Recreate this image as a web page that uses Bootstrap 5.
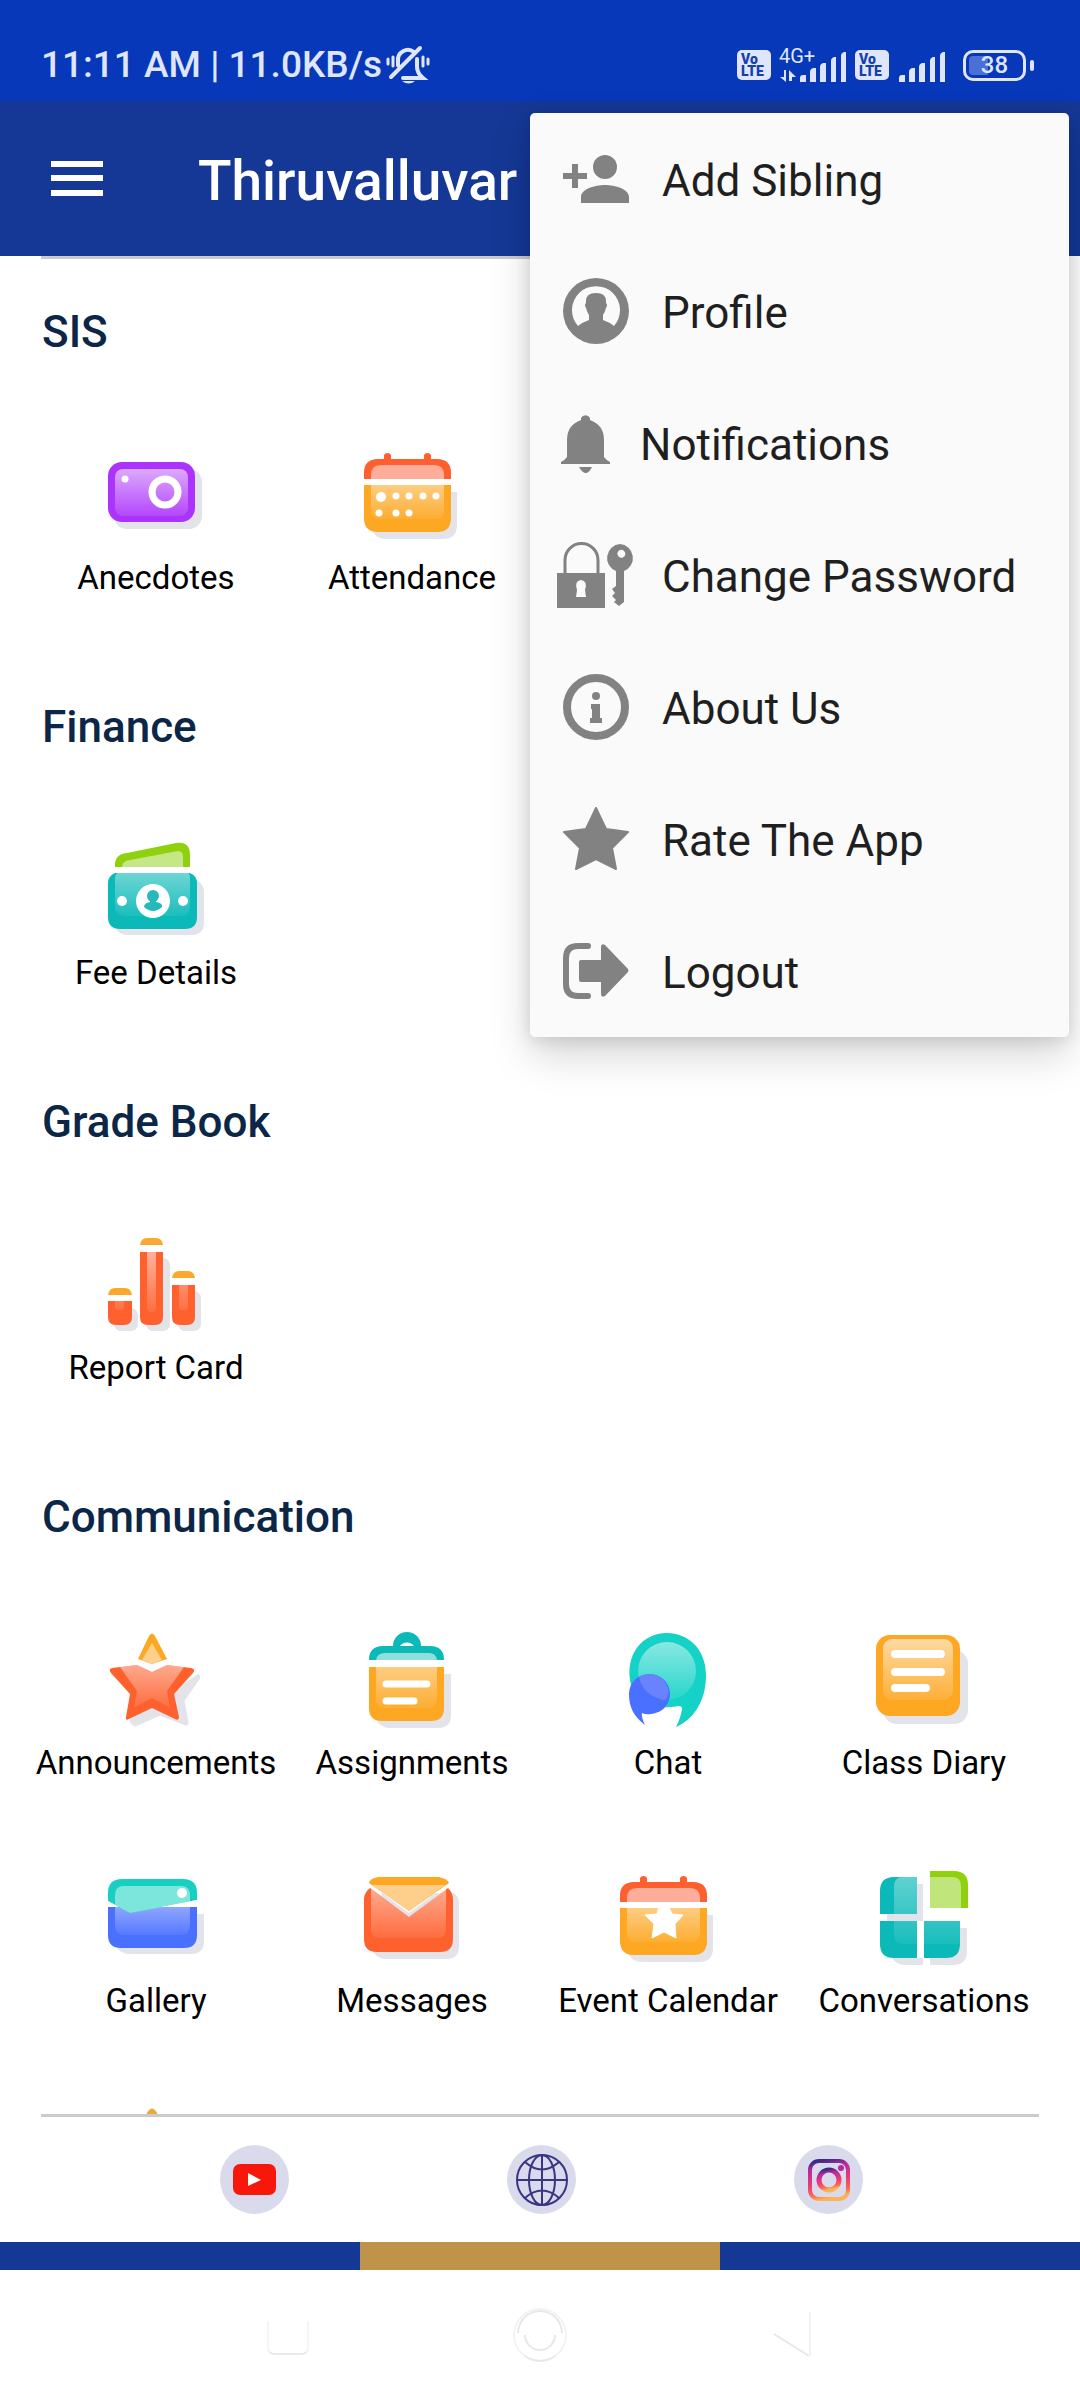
<!DOCTYPE html>
<html lang="en">
<head>
<meta charset="utf-8">
<meta name="viewport" content="width=device-width, initial-scale=1">
<title>Thiruvalluvar</title>
<link href="https://cdn.jsdelivr.net/npm/bootstrap@5.3.0/dist/css/bootstrap.min.css" rel="stylesheet">
<style>
  :root { --royal: #153896; --status: #0638b9; --ink: #0b2647; --rule: #cbcbcf; --frost: #dfe6fb; }
  body { height: 100vh; font-family: Roboto, "Liberation Sans", sans-serif; background: #fff; color: #000; }
  svg { display: block; flex: none; }
  .status-strip { height: 101px; padding: 29px 46px 0 41px; background: var(--status); color: var(--frost); }
  .status-clock { font-size: 37px; line-height: 48px; font-weight: 500; }
  .volte { width: 34px; height: 30px; border-radius: 5px; background: var(--frost); color: #153fae; font-size: 14px; line-height: 12px; font-weight: 900; padding: 3px 0 3px 4px; }
  .power { width: 63px; height: 31px; border: 3px solid var(--frost); border-radius: 10px; font-size: 24px; line-height: 25px; font-weight: 500;
    background: linear-gradient(90deg, #4a6fd6 38%, transparent 38%) content-box; padding: 3px; }
  .power span { display: block; margin-top: -3px; text-align: center; }
  .power-nub { width: 4px; height: 11px; border-radius: 2px; background: var(--frost); }
  .app-bar { height: 155px; background: var(--royal); color: #fff; padding-left: 51px; z-index: 5; }
  .app-title { font-size: 55px; line-height: 64px; font-weight: 500; margin-left: 95px; padding-top: 4px; }
  .more-menu { top: 12px; right: 11px; width: 539px; max-width: calc(100% - 22px); padding: 0; border: 0; border-radius: 5px; background: #fafafa;
    box-shadow: 0 18px 40px rgba(0,0,0,.17), 0 2px 16px rgba(0,0,0,.12); }
  .more-menu .dropdown-item { height: 132px; padding: 4px 27px 0; gap: 27px; color: #1f1f1f; font-size: 44px; line-height: 52px; }
  .more-menu svg { margin-top: -4px; fill: #828282; }
  .sheet { flex: 1 1 0; min-height: 0; overflow: hidden; padding: 14px 28px 0; }
  .rule { height: 3px; margin: 0 41px; background: var(--rule); }
  .group-head { height: 157px; padding: 29px 0 0 14px; margin: 0; font-size: 44px; line-height: 60px; font-weight: 500; color: var(--ink); }
  .tile { height: 238px; padding-top: 16px; gap: 12px; color: #000; font-size: 33px; line-height: 40px; text-decoration: none; white-space: nowrap; }
  .social-row { height: 125px; padding: 0 108px 0 111px; }
  .social-link { width: 69px; height: 69px; border-radius: 50%; background: #d9dbed; }
  .tri-band { height: 28px; }
  .band-blue { background: var(--royal); }
  .band-gold { background: #bf9349; }
  .nav-keys { height: 130px; padding: 0 162px; }
  .nav-key { border: 0; background: none; padding: 0; }
</style>
</head>
<body class="d-flex flex-column overflow-hidden">
<svg width="0" height="0" class="position-absolute" aria-hidden="true">
  <defs>
    <linearGradient id="shine" x1="0" y1="0" x2="0" y2="1"><stop offset="0" stop-color="#fff" stop-opacity=".58"/><stop offset="1" stop-color="#fff" stop-opacity=".1"/></linearGradient>
    <linearGradient id="insta" x1=".2" y1="0" x2=".4" y2="1"><stop offset="0" stop-color="#3a2a86"/><stop offset=".2" stop-color="#b52b9b"/><stop offset=".6" stop-color="#ef3a78"/><stop offset=".85" stop-color="#f9684f"/><stop offset="1" stop-color="#fdb254"/></linearGradient>
    <g id="calendar">
      <path d="M20 46H95V79Q95 93 81 93H24Q14 93 10 84Z" fill="#e3e4e9"/>
      <path d="M2 33V27Q2 13 16 13H22V9a4 4 0 0 1 7 0v4H62V9a4 4 0 0 1 7 0v4H75Q89 13 89 27V33Z" fill="#fd5f2e"/>
      <path d="M9 33V29Q9 19 19 19H72Q82 19 82 29V33Z" fill="#fdad9a"/>
      <path d="M2 39H89V72Q89 86 75 86H16Q2 86 2 72Z" fill="#fda722"/>
      <path d="M9 39H82V64Q82 73 73 73H18Q9 73 9 64Z" fill="url(#shine)" opacity=".75"/>
    </g>
    <g id="signal"><path d="M0 30v-4q0-3 3-3h3v7zM10 30V20q0-3 3-4h3v14zM20 30V15q0-3 3-4h3v19zM31 30V9q0-3 3-4h2v25zM41 30V4q0-3 3-4h2v30z"/></g>
  </defs>
</svg>

<header>
  <div class="status-strip d-flex justify-content-between align-items-center">
    <div class="status-clock d-flex align-items-center">
      <span>11:11 AM | 11.0KB/s</span>
      <svg class="ms-1" width="44" height="40" viewBox="0 0 44 40" fill="none" stroke="#dfe6fb" stroke-width="3" stroke-linecap="round"><path d="M12 20v-4a10 10 0 0 1 16-9M31 14v8q0 6 6 11H17M5 32 34 3" stroke-width="4"/><path d="M2 14v5M7 12v9M37 12v9M42 14v5M12 18v3"/><path d="M16 36h13q-6 5-13 0z" fill="#dfe6fb" stroke="none"/></svg>
    </div>
    <div class="d-flex align-items-center">
      <div class="volte">Vo<br>LTE</div>
      <svg class="ms-2" width="68" height="46" viewBox="0 -6 68 46" fill="#dfe6fb"><text x="0" y="15" font-size="20">4G+</text><path d="M5 22v7H1l6 5V22zM10 33V22l7 7h-4v4z"/><use href="#signal" x="21" y="4"/></svg>
      <div class="volte ms-2">Vo<br>LTE</div>
      <svg class="ms-2" width="50" height="34" viewBox="-2 0 50 34" fill="#dfe6fb"><use href="#signal" y="4"/></svg>
      <div class="power ms-3"><span>38</span></div>
      <div class="power-nub ms-1"></div>
    </div>
  </div>

  <nav class="app-bar position-relative d-flex align-items-center">
    <button type="button" class="nav-key" aria-label="Menu"><svg width="52" height="36" viewBox="0 0 52 36" fill="#fff"><path d="M0 0h52v6H0zM0 14h52v6H0zM0 29h52v6H0z"/></svg></button>
    <h1 class="app-title mb-0">Thiruvalluvar</h1>
    <div class="more-menu dropdown-menu show">
      <button type="button" class="dropdown-item d-flex align-items-center">
        <svg width="78" height="50" viewBox="-6 0 78 50"><circle cx="42" cy="13" r="12"/><path d="M18 49v-6c0-8 14-12 24-12s24 4 24 12v6zM9 10h6v9h9v6h-9v9H9v-9H0v-6h9z"/></svg>
        <span>Add Sibling</span>
      </button>
      <button type="button" class="dropdown-item d-flex align-items-center">
        <svg width="78" height="66" viewBox="-6 0 78 66"><path fill-rule="evenodd" d="M33 0a33 33 0 1 0 0 66a33 33 0 0 0 0-66zM15 48A24 24 0 1 1 51 48Q46 44 40 42V37Q42 34 43 30Q45 27 43 25Q44 15 33 15T23 25Q21 27 23 30Q24 34 26 37V42Q20 44 15 48z"/></svg>
        <span>Profile</span>
      </button>
      <button type="button" class="dropdown-item d-flex align-items-center">
        <svg width="56" height="60" viewBox="-4 0 56 60"><path d="M20 5a5 5 0 0 1 9 0v2q14 5 14 20v17q2 3 6 5v2H0v-2q4-2 6-5V27Q6 12 20 7zM18 54h13q-6 12-13 0z"/></svg>
        <span>Notifications</span>
      </button>
      <button type="button" class="dropdown-item d-flex align-items-center">
        <svg width="78" height="66" viewBox="0 0 78 66"><path d="M8 32V18a16 16 0 0 1 33 0v14" fill="none" stroke="#828282" stroke-width="3"/><path fill-rule="evenodd" d="M0 31h48v35H0zM19 55h10l-1-7q3-9-4-10q-7 1-4 10zM63 2a14 14 0 0 0-4 27v15l-4 3 3 4-3 3 4 4-2 2 5 4 5-4V29A14 14 0 0 0 63 2zM63 8a4 4 0 1 1-1 7a4 4 0 0 1 1-7z"/></svg>
        <span>Change Password</span>
      </button>
      <button type="button" class="dropdown-item d-flex align-items-center">
        <svg width="78" height="66" viewBox="-6 0 78 66"><circle cx="33" cy="33" r="29" fill="none" stroke="#828282" stroke-width="8"/><circle cx="33" cy="22" r="4"/><path d="M28 30h9v14h2v5H27v-5h2v-9h-1z"/></svg>
        <span>About Us</span>
      </button>
      <button type="button" class="dropdown-item d-flex align-items-center">
        <svg width="78" height="66" viewBox="-6 -1 78 66"><path d="M33 1 43 22 65 25 49 41 53 62 33 52 13 62 17 41 1 25 23 22Z" stroke="#828282" stroke-width="2" stroke-linejoin="round"/></svg>
        <span>Rate The App</span>
      </button>
      <button type="button" class="dropdown-item d-flex align-items-center">
        <svg width="78" height="56" viewBox="-6 0 78 56"><path d="M25 3H15Q3 3 3 15V41Q3 53 15 53H25" fill="none" stroke="#828282" stroke-width="6" stroke-linecap="round"/><path d="M18 17h20V4q0-4 4-2L65 26q1 2 0 3L42 53q-4 2-4-2V39H18q-2 0-2-2V19q0-2 2-2z"/></svg>
        <span>Logout</span>
      </button>
    </div>
  </nav>
</header>
<div class="rule"></div>

<main class="sheet">
  <section>
    <h2 class="group-head">SIS</h2>
    <div class="row g-0 row-cols-4">
      <a href="#" class="tile col d-flex flex-column align-items-center">
        <svg width="100" height="100" viewBox="0 0 100 100"><rect x="8" y="23" width="88" height="60" rx="13" fill="#e3e4e9"/><rect x="2" y="16" width="87" height="60" rx="14" fill="#ac33fb"/><rect x="9" y="23" width="73" height="47" rx="8" fill="url(#shine)"/><circle cx="59" cy="46" r="13" fill="none" stroke="#fff" stroke-width="7"/><circle cx="19" cy="33" r="3.500" fill="#fff"/></svg>
        <span>Anecdotes</span>
      </a>
      <a href="#" class="tile col d-flex flex-column align-items-center">
        <svg width="100" height="100" viewBox="0 0 100 100"><use href="#calendar"/><g fill="#fff"><circle cx="19" cy="51" r="5"/><circle cx="34" cy="50" r="3.500"/><circle cx="47" cy="50" r="3.500"/><circle cx="61" cy="50" r="3.500"/><circle cx="74" cy="50" r="3.500"/><circle cx="17" cy="67" r="3.500"/><circle cx="34" cy="67" r="3.500"/><circle cx="47" cy="67" r="3.500"/></g></svg>
        <span>Attendance</span>
      </a>
    </div>
  </section>
  <section>
    <h2 class="group-head">Finance</h2>
    <div class="row g-0 row-cols-4">
      <a href="#" class="tile col d-flex flex-column align-items-center">
        <svg width="100" height="100" viewBox="0 0 100 100"><path d="M20 39H91Q98 44 98 50V81Q98 94 85 94H22Q14 94 10 88Z" fill="#e3e4e9"/><path d="M9 26Q8 13 21 12L70 2Q84 0 84 14V26Z" fill="#8fd10c"/><path d="M16 26Q16 20 24 19L72 10Q77 10 77 16V26Z" fill="#c5e787"/><path d="M9 32H84Q91 35 91 42V76Q91 88 79 88H14Q2 88 2 76V42Q2 35 9 32Z" fill="#0bb9b8"/><path d="M11 32H83Q84 34 84 38V64Q84 75 75 75H18Q9 75 9 64V38Q9 34 11 32Z" fill="url(#shine)" opacity=".7"/><circle cx="47" cy="60" r="17" fill="#fff"/><circle cx="16" cy="60" r="5" fill="#fff"/><circle cx="77" cy="60" r="5" fill="#fff"/><circle cx="47" cy="55" r="6" fill="#25b9ba"/><path d="M44 58h6v3q7 1 6 5-9 8-18 0 0-4 6-5z" fill="#25b9ba"/></svg>
        <span>Fee Details</span>
      </a>
    </div>
  </section>
  <section>
    <h2 class="group-head">Grade Book</h2>
    <div class="row g-0 row-cols-4">
      <a href="#" class="tile col d-flex flex-column align-items-center">
        <svg width="100" height="100" viewBox="0 0 100 100"><g fill="#e3e4e9"><rect x="8" y="72" width="24" height="23" rx="7"/><rect x="40" y="22" width="24" height="73" rx="7"/><rect x="72" y="55" width="23" height="40" rx="7"/></g><g fill="#fba92d"><path d="M2 59q1-7 7-7h10q6 0 7 7zM34 9q1-7 7-7h9q6 0 7 7zM66 42q1-7 7-7h9q6 0 7 7z"/></g><g fill="#fff"><path d="M2 59h24v6H2zM34 9h23v7H34zM66 42h23v7H66z"/></g><g fill="#fe602e"><path d="M2 65h24v16q0 8-8 8h-8q-8 0-8-8zM34 16h23v65q0 8-8 8h-7q-8 0-8-8zM66 49h23v32q0 8-8 8h-7q-8 0-8-8z"/></g><path d="M9 65h9v6q0 3-3 3h-3q-3 0-3-3zM41 16h9v56q0 4-4 4h-1q-4 0-4-4zM73 49h9v22q0 3-3 3h-3q-3 0-3-3z" fill="url(#shine)" opacity=".9"/></svg>
        <span>Report Card</span>
      </a>
    </div>
  </section>
  <section>
    <h2 class="group-head">Communication</h2>
    <div class="row g-0 row-cols-4">
      <a href="#" class="tile col d-flex flex-column align-items-center">
        <svg width="100" height="100" viewBox="0 0 100 100"><path d="M92 46 76 69 80 92 54 82 29 93 26 90Z" fill="#e3e4e9" stroke="#e3e4e9" stroke-width="5" stroke-linejoin="round"/><path d="M43 5q3-5 6 0L61 28 46 33 32 28Z" fill="#fda722"/><path d="M46 12 56 29 46 33 36 29Z" fill="#fdd08b"/><path d="M31 34 46 41 61 34 85 37q5 1 2 5L68 63 73 86q0 4-4 2L46 77 23 88q-4 2-3-2L24 63 5 42q-3-4 1-5Z" fill="#fe602e"/><path d="M14 36 31 34 46 41 61 34 78 36 61 60 64 77 46 67 28 77 31 60Z" fill="url(#shine)" opacity=".8"/></svg>
        <span>Announcements</span>
      </a>
      <a href="#" class="tile col d-flex flex-column align-items-center">
        <svg width="100" height="100" viewBox="0 0 100 100"><path d="M20 43H89V84Q89 97 76 97H27Q20 97 15 90Z" fill="#e3e4e9"/><path d="M7 29Q7 15 21 15H31a14 14 0 0 1 28 0H68Q82 15 82 29Z" fill="#0bb9b8"/><path d="M38 15a8 7 0 0 1 14 0z" fill="#fff"/><path d="M14 29Q15 22 23 22H67Q74 22 75 29Z" fill="#90dfdc"/><path d="M7 36H82V77Q82 90 69 90H20Q7 90 7 77Z" fill="#fda722"/><path d="M14 36H75V68Q75 77 66 77H23Q14 77 14 68Z" fill="url(#shine)" opacity=".75"/><path d="M24 53H65M24 70H52" stroke="#fff" stroke-width="7" stroke-linecap="round"/></svg>
        <span>Assignments</span>
      </a>
      <a href="#" class="tile col d-flex flex-column align-items-center">
        <svg width="100" height="100" viewBox="0 0 100 100"><path d="M49 2C70 2 88 18 88 44C88 70 76 88 58 96Q63 86 64 78Q64 75 61 75Q50 77 42 76L13 54C6 24 24 2 49 2Z" fill="#14d2c6"/><circle cx="49" cy="40" r="29" fill="url(#shine)" opacity=".85"/><path d="M31 43A20 20 0 0 1 33 83Q28 84 24 82Q23 86 27 94C15 85 11 75 11 63A20 20 0 0 1 31 43Z" fill="#4a70ff"/><path d="M21 46Q36 38 47 51Q54 61 47 69Q26 66 21 46Z" fill="#7f90ff" opacity=".6"/></svg>
        <span>Chat</span>
      </a>
      <a href="#" class="tile col d-flex flex-column align-items-center">
        <svg width="100" height="100" viewBox="0 0 100 100"><rect x="9" y="19" width="85" height="74" rx="14" fill="#e3e4e9"/><rect x="2" y="4" width="84" height="81" rx="14" fill="#fda722"/><rect x="9" y="8" width="70" height="61" rx="9" fill="url(#shine)"/><path d="M21 23H67M21 41H67M21 57H52" stroke="#fff" stroke-width="8" stroke-linecap="round"/></svg>
        <span>Class Diary</span>
      </a>
      <a href="#" class="tile col d-flex flex-column align-items-center">
        <svg width="100" height="100" viewBox="0 0 100 100"><path d="M20 45H98V72Q98 85 85 85H24Q16 85 11 79Z" fill="#e3e4e9"/><path d="M2 38H91V66Q91 79 78 79H15Q2 79 2 66Z" fill="#4a70ff"/><path d="M9 38H84V56Q84 66 75 66H18Q9 66 9 56Z" fill="url(#shine)" opacity=".65"/><path d="M2 32V24Q2 10 16 10H77Q91 10 91 24V31L24 44Z" fill="#17d0c2"/><path d="M9 36V26Q9 17 18 17H75Q84 17 84 26V33L24 44Z" fill="#7ce6dc"/><path d="M2 32 12 38H2ZM55 38 91 31V38Z" fill="#fff"/><circle cx="76" cy="24" r="5" fill="#fff"/></svg>
        <span>Gallery</span>
      </a>
      <a href="#" class="tile col d-flex flex-column align-items-center">
        <svg width="100" height="100" viewBox="0 0 100 100"><path d="M20 24H92Q97 28 97 34V77Q97 90 84 90H24Q16 90 11 83Z" fill="#e3e4e9"/><path d="M7 14 47 44 87 14 90 18 86 22H8Z" fill="#fff"/><path d="M8 19 47 48 86 19Q91 24 91 30V70Q91 83 78 83H15Q2 83 2 70V30Q2 24 8 19Z" fill="#fe602e"/><path d="M9 20 47 48 84 20V60Q84 69 75 69H18Q9 69 9 60Z" fill="url(#shine)" opacity=".8"/><path d="M7 14Q7 10 16 8H77Q86 10 87 14L47 42Z" fill="#fda722"/><path d="M10 16H83L47 42Z" fill="#fdcf8a"/></svg>
        <span>Messages</span>
      </a>
      <a href="#" class="tile col d-flex flex-column align-items-center">
        <svg width="100" height="100" viewBox="0 0 100 100"><use href="#calendar"/><path d="M41 38H51L54 45 65 46 57 55 58 69 46 63 34 69 36 55 27 46 39 45Z" fill="#fff" stroke="#fff" stroke-linejoin="round"/></svg>
        <span>Event Calendar</span>
      </a>
      <a href="#" class="tile col d-flex flex-column align-items-center">
        <svg width="100" height="100" viewBox="0 0 100 100"><path d="M43 15H49V52H43ZM13 45H43V52H13ZM18 89H49V96H30Q22 95 18 89ZM56 89H72Q86 88 86 74V59H93V82Q93 96 79 96H56Z" fill="#e3e4e9"/><path d="M43 8V45H6V22Q6 8 20 8ZM6 52H43V89H20Q6 89 6 75ZM50 52H86V75Q86 89 72 89H50Z" fill="#0bb9b8"/><path d="M43 8V45H20V18Q20 9 27 8ZM20 52H43V75H30Q20 75 20 66ZM50 52H86V75H50Z" fill="url(#shine)" opacity=".6"/><path d="M56 2H80Q94 2 94 16V39H56Z" fill="#8fd10c"/><path d="M56 8H78Q87 8 87 17V39H56Z" fill="#bfe57b"/></svg>
        <span>Conversations</span>
      </a>
      <a href="#" class="tile col d-flex flex-column align-items-center" aria-label="More">
        <svg width="100" height="100" viewBox="0 0 100 100"><path d="M41 6q5-9 10 0L61 28 46 33 32 28Z" fill="#e8a93d"/></svg>
      </a>
    </div>
  </section>
</main>

<footer>
  <div class="rule"></div>
  <div class="social-row d-flex justify-content-around align-items-center">
    <a href="#" class="social-link d-flex align-items-center justify-content-center" aria-label="YouTube"><svg width="45" height="33" viewBox="0 0 45 33"><rect x="1" y="1" width="43" height="31" rx="7" fill="#f8180b"/><path d="M16 10v13l13-6z" fill="#fff"/></svg></a>
    <a href="#" class="social-link d-flex align-items-center justify-content-center" aria-label="Website"><svg width="54" height="54" viewBox="0 0 54 54" fill="none" stroke="#3b3483" stroke-width="2"><circle cx="27" cy="27" r="25"/><ellipse cx="27" cy="27" rx="13" ry="25"/><path d="M27 2v50M2 27h50M10 9q17 15 34 0M10 45q17-15 34 0"/></svg></a>
    <a href="#" class="social-link d-flex align-items-center justify-content-center" aria-label="Instagram"><svg width="44" height="44" viewBox="0 0 44 44"><rect x="3" y="3" width="38" height="38" rx="9" fill="none" stroke="url(#insta)" stroke-width="4"/><circle cx="22" cy="22" r="10" fill="none" stroke="url(#insta)" stroke-width="5"/><circle cx="34" cy="10" r="3" fill="#b52b9b"/></svg></a>
  </div>
  <div class="tri-band row g-0"><div class="col band-blue"></div><div class="col band-gold"></div><div class="col band-blue"></div></div>
  <div class="nav-keys d-flex justify-content-around align-items-center">
    <button type="button" class="nav-key" aria-label="Recent apps"><svg width="56" height="56" viewBox="0 0 56 56" fill="none" stroke="#ebebeb" stroke-width="2"><path d="M8 14v27q0 6 6 6h28q6 0 6-6V14" stroke="#f5f5f5"/><path d="M10 45q2 2 4 2h28q2 0 4-2"/></svg></button>
    <button type="button" class="nav-key" aria-label="Home"><svg width="56" height="56" viewBox="0 0 56 56" fill="none" stroke="#e8e8e8" stroke-width="2"><circle cx="28" cy="28" r="26" stroke="#f3f3f3"/><path d="M6 26a22 22 0 0 1 44 0M13 28a15 15 0 0 0 30 0M13 49a26 26 0 0 0 30 0"/></svg></button>
    <button type="button" class="nav-key" aria-label="Back"><svg width="56" height="56" viewBox="0 0 56 56" fill="none" stroke="#e8e8e8" stroke-width="2"><path d="M10 27 45 49"/><path d="M46 5V49" stroke="#f3f3f3"/></svg></button>
  </div>
</footer>
<script src="https://cdn.jsdelivr.net/npm/bootstrap@5.3.0/dist/js/bootstrap.bundle.min.js"></script>
</body>
</html>
